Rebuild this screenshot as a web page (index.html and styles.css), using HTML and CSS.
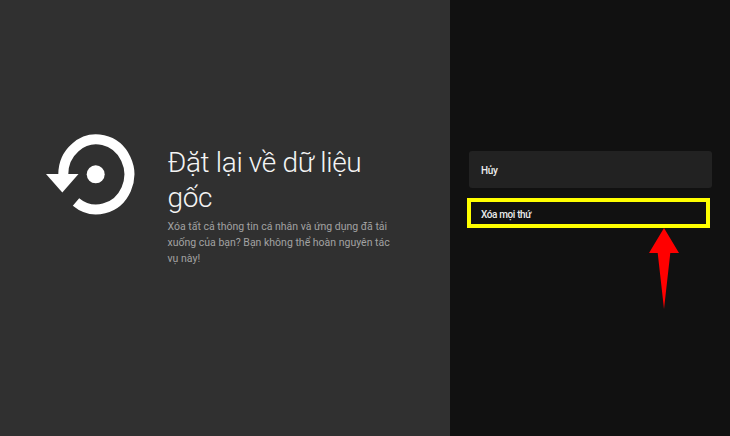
FILE: index.html
```html
<!DOCTYPE html>
<html lang="vi">
<head>
<meta charset="utf-8">
<title>Đặt lại về dữ liệu gốc</title>
<link rel="stylesheet" href="styles.css">
</head>
<body>
<main class="screen">
  <section class="info">
    <svg class="reset-icon" viewBox="0 0 100 90" width="100" height="90" aria-hidden="true">
      <path class="ring" d="M30 68A33 35 0 1 0 17.3 41" />
      <polygon class="fill" points="0,40 32.5,40 16.3,58.5" />
      <circle class="fill" cx="49.7" cy="40.3" r="9" />
    </svg>
    <div class="copy">
      <h1 class="title">Đặt lại về dữ liệu gốc</h1>
      <p class="desc">Xóa tất cả thông tin cá nhân và ứng dụng đã tải xuống của bạn? Bạn không thể hoàn nguyên tác vụ này!</p>
    </div>
  </section>
  <section class="actions">
    <div class="option option-card">Hủy</div>
    <div class="option option-marked">Xóa mọi thứ
      <svg class="pointer" viewBox="0 0 30 82" width="30" height="82" aria-hidden="true">
        <polygon points="15,0 30,25 21.3,25 15,81 8.7,25 0,25" />
      </svg>
    </div>
  </section>
</main>
</body>
</html>
```
FILE: styles.css
```css
* { box-sizing: border-box; }
html, body { margin: 0; padding: 0; }
body { width: 730px; height: 436px; overflow: hidden; background: #111; font-family: Roboto, "Noto Sans", sans-serif; }
.screen { display: flex; width: 730px; height: 436px; }
.info {
  width: 450px;
  background: #303030;
  display: flex;
  align-items: flex-start;
  padding: 134px 0 0 46px;
}
.reset-icon { flex: none; display: block; }
.ring { fill: none; stroke: #fff; stroke-width: 10; }
.fill { fill: #fff; }
.copy { width: 232px; margin-left: 21.5px; padding-top: 11px; }
.title { margin: 0; font-size: 28px; line-height: 35px; font-weight: 300; letter-spacing: -0.33px; color: #f4f4f4; }
.desc { margin: 4px 0 0; font-size: 10.5px; line-height: 16px; font-weight: 400; color: #a2a2a2; }
.actions { flex: 1; padding: 151px 18px 0 18.5px; }
.option { font-size: 10px; font-weight: 500; letter-spacing: -0.38px; color: #ececec; display: flex; align-items: center; }
.option-card { height: 37px; padding: 2px 0 0 12.5px; background: #222; border-radius: 3px; }
.option-marked {
  position: relative;
  width: 243px;
  height: 30px;
  margin: 10px 0 0 -1.5px;
  padding: 3px 0 0 10px;
  border: 4px solid #ff0;
}
.pointer { position: absolute; left: 178px; top: 26px; fill: #f00; }
```
